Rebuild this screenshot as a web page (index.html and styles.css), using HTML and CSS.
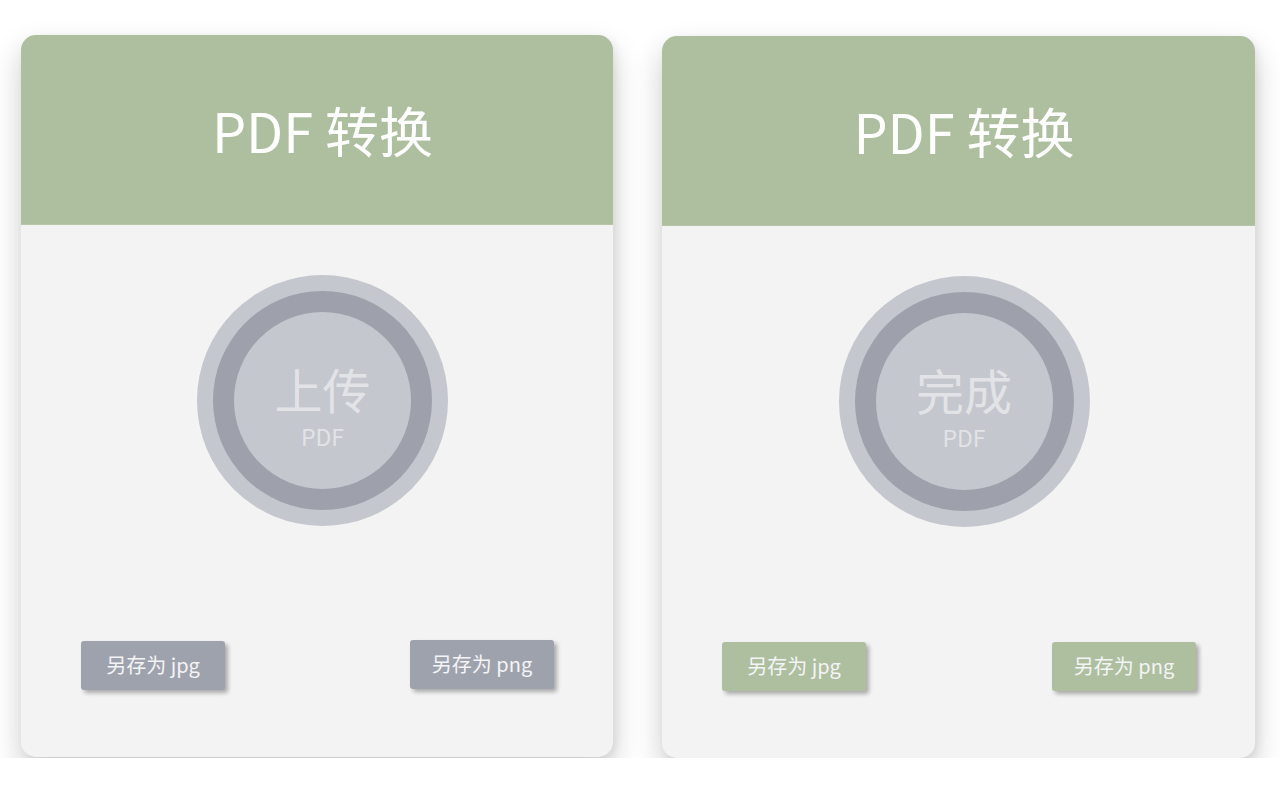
FILE: index.html
```html
<!DOCTYPE html>
<html lang="zh">
<head>
<meta charset="utf-8">
<title>PDF 转换</title>
<link rel="stylesheet" href="styles.css">
</head>
<body>
<main class="page">
  <section class="card card-grey">
    <header class="card-head"><h1 class="title">PDF 转换</h1></header>
    <div class="card-body">
      <div class="disc">
        <div class="ring">
          <div class="core">
            <span class="core-main">上传</span>
            <span class="core-sub">PDF</span>
          </div>
        </div>
      </div>
      <div class="actions">
        <button class="btn">另存为 jpg</button>
        <button class="btn btn-up">另存为 png</button>
      </div>
    </div>
  </section>
  <section class="card card-green card-down">
    <header class="card-head"><h1 class="title">PDF 转换</h1></header>
    <div class="card-body">
      <div class="disc">
        <div class="ring">
          <div class="core">
            <span class="core-main">完成</span>
            <span class="core-sub">PDF</span>
          </div>
        </div>
      </div>
      <div class="actions">
        <button class="btn">另存为 jpg</button>
        <button class="btn">另存为 png</button>
      </div>
    </div>
  </section>
</main>
</body>
</html>
```

FILE: styles.css
```css
* { box-sizing: border-box; }
html, body {
  margin: 0;
  padding: 0;
  background: #ffffff;
  font-family: "Noto Sans CJK SC", "Noto Sans", sans-serif;
}
.page {
  display: flex;
  align-items: flex-start;
  gap: 49px;
  padding: 35px 0 0 21px;
}
.card {
  width: 592px;
  height: 722px;
  background: #f3f3f3;
  border-radius: 15px;
  overflow: hidden;
  box-shadow: 0 14px 30px rgba(0, 0, 0, 0.2), 3px 3px 8px rgba(0, 0, 0, 0.06);
  display: flex;
  flex-direction: column;
}
.card-down { margin-top: 1px; width: 593px; }
.card-head {
  height: 190px;
  background: #adbf9f;
  border-bottom: 1px solid #b7c6ab;
  display: flex;
  align-items: center;
  justify-content: center;
  padding-left: 11px;
}
.title {
  margin: 0;
  color: #ffffff;
  font-weight: 400;
  font-size: 54px;
  line-height: 1;
}
.card-body {
  flex: 1;
  display: flex;
  flex-direction: column;
  align-items: center;
  padding-top: 50px;
}
.disc {
  width: 251px;
  height: 251px;
  margin-left: 11px;
  border-radius: 50%;
  background: #c4c7ce;
  display: flex;
  align-items: center;
  justify-content: center;
}
.ring {
  width: 219px;
  height: 219px;
  border-radius: 50%;
  background: #9ea1ab;
  display: flex;
  align-items: center;
  justify-content: center;
}
.core {
  width: 177px;
  height: 177px;
  border-radius: 50%;
  background: #c4c7ce;
  display: flex;
  flex-direction: column;
  align-items: center;
  justify-content: center;
  padding-top: 10px;
  color: #e2e3e7;
}
.core-main {
  font-size: 48px;
  line-height: 48px;
}
.core-sub {
  font-size: 23px;
  line-height: 24px;
  margin-top: 12px;
}
.actions {
  width: 100%;
  display: flex;
  justify-content: space-between;
  align-items: flex-start;
  padding: 0 59px 0 60px;
  margin-top: 115px;
}
.btn {
  width: 144px;
  height: 49px;
  border: none;
  border-radius: 3px;
  background: #9ea2ad;
  color: #f4f4f6;
  font-family: "Noto Sans CJK SC", "Noto Sans", sans-serif;
  font-size: 20px;
  padding: 0 0 2px;
  box-shadow: 3px 3px 4px rgba(0, 0, 0, 0.3);
}
.btn-up { margin-top: -1px; }
.card-green .btn { background: #adbf9f; }
```
